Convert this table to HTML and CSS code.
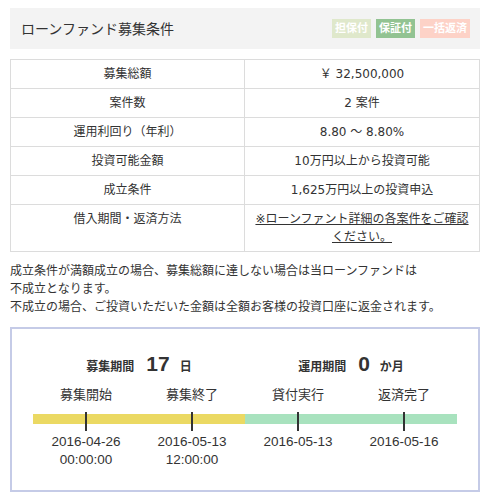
FILE: index.html
```html
<!DOCTYPE html>
<html lang="ja">
<head>
<meta charset="utf-8">
<link rel="stylesheet" href="styles.css">
</head>
<body>
<div class="page">
  <div class="head">
    <h2 class="title">ローンファンド募集条件</h2>
    <div class="badges">
      <span class="badge b-tanpo">担保付</span>
      <span class="badge b-hosho">保証付</span>
      <span class="badge b-ikkatsu">一括返済</span>
    </div>
  </div>

  <table class="cond">
    <tr><th>募集総額</th><td>￥ 32,500,000</td></tr>
    <tr><th>案件数</th><td>2 案件</td></tr>
    <tr><th>運用利回り（年利）</th><td>8.80 ～ 8.80%</td></tr>
    <tr><th>投資可能金額</th><td>10万円以上から投資可能</td></tr>
    <tr><th>成立条件</th><td>1,625万円以上の投資申込</td></tr>
    <tr class="top"><th>借入期間・返済方法</th><td><a class="link" href="#">※ローンファント詳細の各案件をご確認ください。</a></td></tr>
  </table>

  <p class="note">成立条件が満額成立の場合、募集総額に達しない場合は当ローンファンドは<br>不成立となります。<br>不成立の場合、ご投資いただいた金額は全額お客様の投資口座に返金されます。</p>

  <div class="timeline">
    <div class="periods">
      <div class="period"><span class="p-label">募集期間</span><span class="p-num">17</span><span class="p-unit">日</span></div>
      <div class="period"><span class="p-label">運用期間</span><span class="p-num">0</span><span class="p-unit">か月</span></div>
    </div>
    <div class="steps">
      <div class="step">
        <div class="s-label">募集開始</div>
        <div class="s-bar yellow"><span class="tick"></span></div>
        <div class="s-date">2016-04-26<br>00:00:00</div>
      </div>
      <div class="step">
        <div class="s-label">募集終了</div>
        <div class="s-bar yellow"><span class="tick"></span></div>
        <div class="s-date">2016-05-13<br>12:00:00</div>
      </div>
      <div class="step">
        <div class="s-label">貸付実行</div>
        <div class="s-bar green"><span class="tick"></span></div>
        <div class="s-date">2016-05-13</div>
      </div>
      <div class="step">
        <div class="s-label">返済完了</div>
        <div class="s-bar green"><span class="tick"></span></div>
        <div class="s-date">2016-05-16</div>
      </div>
    </div>
  </div>
</div>
</body>
</html>
```

FILE: styles.css
```css
* { box-sizing: border-box; }
html, body { margin: 0; padding: 0; background: #fff; }
body {
  font-family: "Liberation Sans", "Noto Sans CJK JP", sans-serif;
  color: #333;
  font-size: 12px;
}
.page {
  width: 470px;
  margin: 8px 0 0 10px;
}
.head {
  height: 41px;
  background: #f3f3f3;
  display: flex;
  align-items: center;
  justify-content: space-between;
  padding: 0 10px 0 11px;
}
.title {
  margin: 0;
  font-size: 14px;
  font-weight: normal;
  line-height: 20px;
  color: #333;
}
.badges { display: flex; gap: 5px; }
.badge {
  display: block;
  height: 19px;
  line-height: 19px;
  padding: 0 3px;
  color: #fff;
  font-size: 11px;
  font-weight: bold;
}
.b-tanpo { background: #dfe8cb; }
.b-hosho { background: #92c392; }
.b-ikkatsu { background: #fdd2c7; }

.cond {
  width: 470px;
  margin-top: 10px;
  border-collapse: collapse;
  table-layout: fixed;
}
.cond th, .cond td {
  border: 1px solid #dcdcdc;
  font-weight: normal;
  text-align: center;
  line-height: 18px;
  padding: 5px 8px 5px;
  height: 29px;
  vertical-align: middle;
  color: #333;
}
.cond td { font-family: "DejaVu Sans", "Noto Sans CJK JP", sans-serif; }
.cond th { width: 234px; }
.cond tr.top th, .cond tr.top td { vertical-align: top; padding-bottom: 5px; }
.link { color: #333; text-decoration: underline; }

.note {
  margin: 10px 0 11px;
  line-height: 18px;
  font-size: 12px;
}

.timeline {
  border: 2px solid #c5cbe7;
  padding: 23px 21px 21px;
}
.periods {
  display: grid;
  grid-template-columns: 1fr 1fr;
}
.period {
  display: flex;
  align-items: baseline;
  justify-content: center;
  height: 24px;
  line-height: 24px;
}
.p-label { font-weight: bold; font-size: 12px; }
.p-num { font-size: 21px; font-weight: bold; margin: 0 10px 0 12px; }
.p-unit { font-size: 12px; font-weight: bold; }

.steps {
  display: grid;
  grid-template-columns: repeat(4, 1fr);
  margin-top: 10px;
}
.step { display: flex; flex-direction: column; align-items: center; }
.s-label { line-height: 18px; font-size: 13px; }
.s-bar {
  position: relative;
  width: 100%;
  height: 10px;
  margin-top: 10px;
}
.yellow { background: #ebd963; }
.green { background: #a8e2be; }
.tick {
  position: absolute;
  left: 50%;
  top: -2px;
  width: 1.5px;
  height: 19px;
  margin-left: -1px;
  background: #333;
}
.s-date {
  margin-top: 9px;
  text-align: center;
  line-height: 18px;
  font-size: 13.5px;
  min-height: 36px;
}
```
